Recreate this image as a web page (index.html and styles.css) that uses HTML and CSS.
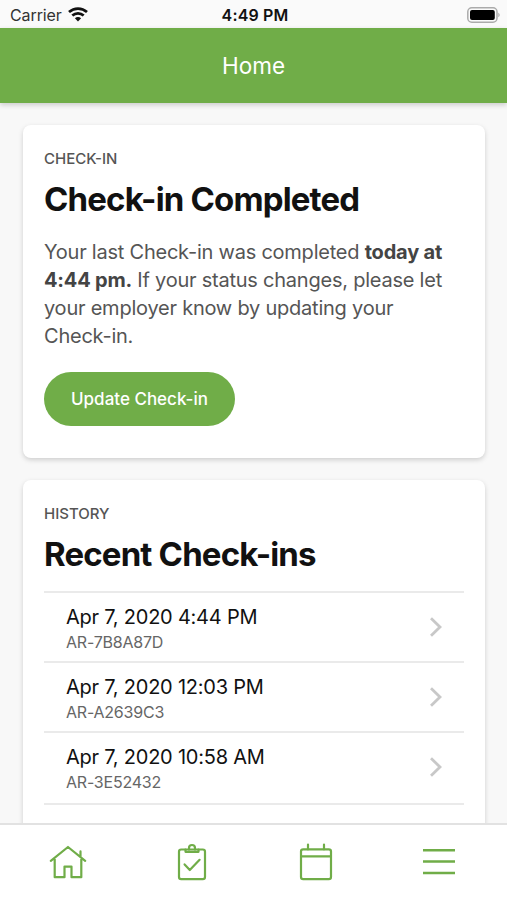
FILE: index.html
```html
<!DOCTYPE html>
<html lang="en">
<head>
<meta charset="utf-8">
<meta name="viewport" content="width=device-width, initial-scale=1">
<title>Home</title>
<link rel="stylesheet" href="styles.css">
</head>
<body>
<div class="app">
  <div class="status">
    <div class="status-left">
      <span class="carrier">Carrier</span>
      <svg class="wifi" width="20" height="15" viewBox="0 0 20 15" fill="none" stroke="#111" stroke-width="2.7">
        <path d="M1 5.1C6.2.4 13.8.4 19 5.1M4.3 8.6c3.3-3 8.1-3 11.4 0"/>
        <path d="M10 14.4 6.9 11.3c1.8-1.6 4.4-1.6 6.2 0z" fill="#111" stroke="none"/>
      </svg>
    </div>
    <span class="clock">4:49 PM</span>
    <svg class="battery" width="33" height="16" viewBox="0 0 33 16">
      <rect x=".8" y=".8" width="29.2" height="14.4" rx="4" fill="#fafafa" stroke="#ababab" stroke-width="1.5"/>
      <rect x="3" y="3" width="24.8" height="10" rx="2" fill="#000"/>
      <path d="M31.3 5.8c1.8.7 1.8 3.7 0 4.4z" fill="#ababab"/>
    </svg>
  </div>
  <header class="header"><h1 class="header-title">Home</h1></header>
  <main class="content">
    <section class="card card-checkin">
      <p class="label">CHECK-IN</p>
      <h2 class="title">Check-in Completed</h2>
      <p class="message">Your last Check-in was completed <strong>today at<br>4:44 pm.</strong> If your status changes, please let<br>your employer know by updating your<br>Check-in.</p>
      <button class="button" type="button">Update Check-in</button>
    </section>
    <section class="card card-history">
      <p class="label">HISTORY</p>
      <h2 class="title">Recent Check-ins</h2>
      <ul class="list">
        <li class="row">
          <div><div class="date">Apr 7, 2020 4:44 PM</div><div class="code">AR-7B8A87D</div></div>
          <svg class="chevron" width="14" height="20" viewBox="0 0 14 20"><path d="m2 1.2 9 8.8-9 8.8"/></svg>
        </li>
        <li class="row">
          <div><div class="date">Apr 7, 2020 12:03 PM</div><div class="code">AR-A2639C3</div></div>
          <svg class="chevron" width="14" height="20" viewBox="0 0 14 20"><path d="m2 1.2 9 8.8-9 8.8"/></svg>
        </li>
        <li class="row">
          <div><div class="date">Apr 7, 2020 10:58 AM</div><div class="code">AR-3E52432</div></div>
          <svg class="chevron" width="14" height="20" viewBox="0 0 14 20"><path d="m2 1.2 9 8.8-9 8.8"/></svg>
        </li>
      </ul>
    </section>
  </main>
  <nav class="tabs">
    <svg class="tab" viewBox="0 0 40 40"><path d="M2.8 18.8 20 5l17.2 13.8M6.7 15.8v19.4h9.8V24.6h7v10.6h9.8V15.8M32.5 14.2V9.4"/></svg>
    <svg class="tab" viewBox="0 0 40 40"><rect x="7" y="7.5" width="26" height="29.6" rx="2.2"/><path d="M13.5 7.5v2.3h13V7.5M17 7.5V6a3 3 0 0 1 6 0v1.5M12.6 22.4l5.2 5.6 9.8-10.2"/></svg>
    <svg class="tab tab-calendar" viewBox="0 0 40 40"><rect x="5" y="7.3" width="30" height="29.8" rx="2.2"/><path d="M5 14.3h30M12 7.3V2.6M28 7.3V2.6"/></svg>
    <svg class="tab" viewBox="0 0 40 40"><path class="menu-lines" d="M4 8.3h32M4 19.6h32M4 30.9h32"/></svg>
  </nav>
</div>
</body>
</html>
```
FILE: styles.css
```css
* { box-sizing: border-box; }
body, h1, h2, p, ul { margin: 0; padding: 0; }
body {
  background: #f8f8f8;
  color: #111;
  font-family: Inter, "Liberation Sans", sans-serif;
}
.app { height: 900px; display: flex; flex-direction: column; overflow: hidden; }
.status {
  flex: none;
  height: 28px;
  padding: 1px 7px 0 10px;
  display: grid;
  grid-template-columns: 1fr auto 1fr;
  align-items: center;
  background: #fafafa;
  font-size: 16px;
}
.status-left { display: flex; align-items: center; gap: 6px; }
.carrier { color: #333; letter-spacing: -.1px; }
.clock { font-weight: 600; letter-spacing: .15px; }
.battery { justify-self: end; }
.header {
  position: relative;
  z-index: 1;
  flex: none;
  height: 75.4px;
  display: flex;
  align-items: center;
  justify-content: center;
  background: #70ad48;
  box-shadow: 0 2px 5px rgba(0, 0, 0, .18);
}
.header-title { color: #fff; font-size: 22.5px; font-weight: 400; }
.content {
  flex: 1;
  min-height: 0;
  overflow: hidden;
  padding: 21.6px 22px 0 22.5px;
  display: flex;
  flex-direction: column;
  gap: 22px;
}
.card {
  flex: none;
  padding: 24px 21.5px 0;
  border-radius: 8px;
  background: #fff;
  box-shadow: 0 2px 5px rgba(0, 0, 0, .17);
}
.card-checkin { height: 333px; }
.card-history { height: 420px; }
.label { color: #555; font-size: 15px; line-height: 20px; font-weight: 500; }
.title {
  margin-top: 8px;
  font-size: 33px;
  line-height: 44px;
  font-weight: 700;
  letter-spacing: -.84px;
  white-space: nowrap;
}
.message {
  margin-top: 16.6px;
  color: #555;
  font-size: 20px;
  line-height: 28.3px;
  letter-spacing: -.23px;
  white-space: nowrap;
}
.message strong { color: #444; font-weight: 700; letter-spacing: -.2px; }
.button {
  display: block;
  width: 191px;
  height: 54px;
  margin-top: 20.8px;
  padding: 0;
  border: 0;
  border-radius: 27px;
  background: #70ad48;
  color: #fff;
  font: 500 17px/54px Inter, "Liberation Sans", sans-serif;
}
.list { margin-top: 15px; list-style: none; border-top: 2px solid #eaeaea; }
.row {
  height: 70px;
  padding: 0 21px 0 22px;
  display: flex;
  align-items: center;
  justify-content: space-between;
  border-bottom: 2px solid #eaeaea;
}
.row:last-child { height: 72px; padding-bottom: 2px; }
.row > div { padding-top: 6px; }
.date { font-size: 20px; line-height: 26px; letter-spacing: -.23px; }
.code { color: #666; font-size: 16px; line-height: 25px; letter-spacing: -.22px; }
.chevron { fill: none; stroke: #c8c8c8; stroke-width: 2.8; }
.tabs {
  position: relative;
  z-index: 1;
  flex: none;
  height: 77px;
  padding: 17px 6px 0;
  display: grid;
  grid-template-columns: repeat(4, 1fr);
  justify-items: center;
  align-items: start;
  border-top: 2px solid #e2e2e2;
  background: #fff;
}
.tab { width: 40px; height: 40px; fill: none; stroke: #70ad48; stroke-width: 2.2; stroke-linejoin: round; stroke-linecap: round; }
.tab-calendar { margin-left: 1px; }
.menu-lines { stroke-width: 2.5; stroke-linecap: butt; }
```
